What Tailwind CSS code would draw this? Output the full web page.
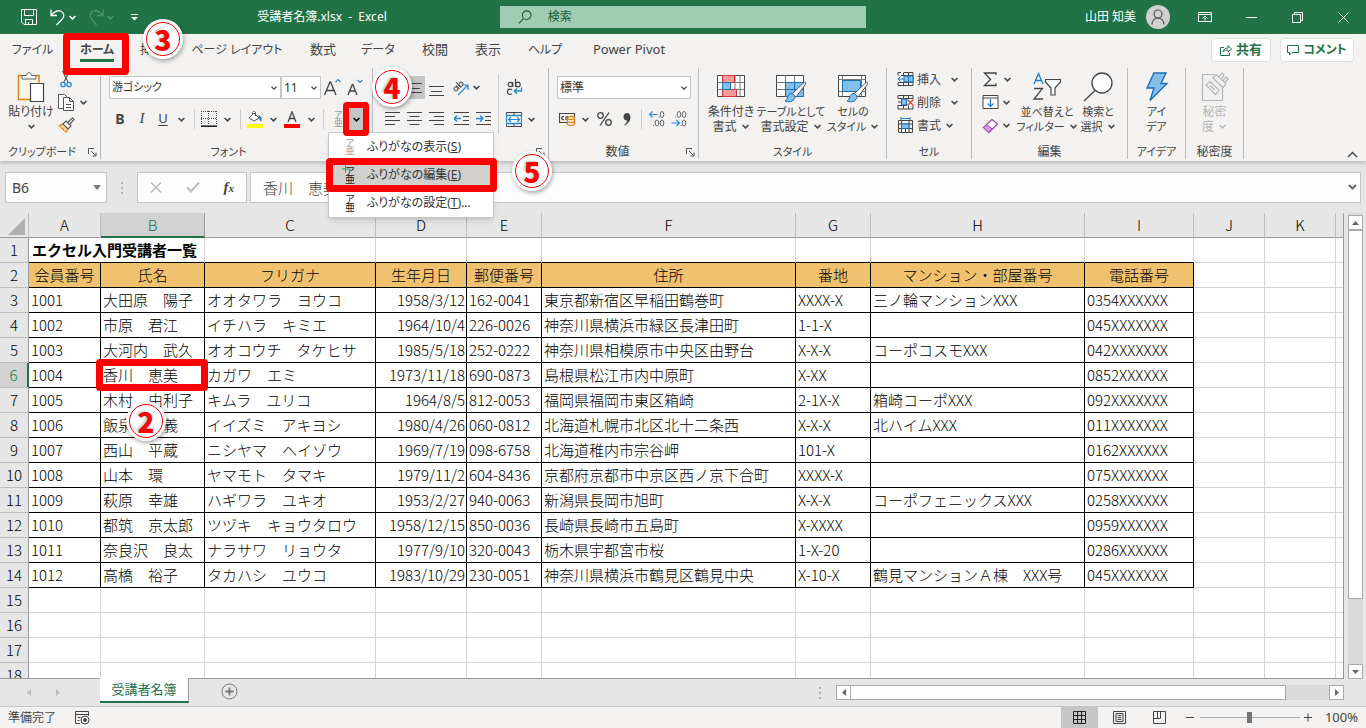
<!DOCTYPE html>
<html lang="ja">
<head>
<meta charset="utf-8">
<title>受講者名簿.xlsx - Excel</title>
<script src="https://cdn.jsdelivr.net/npm/@tailwindcss/browser@4"></script>
</head>
<body class="relative flex h-screen flex-col overflow-hidden bg-[#e6e6e6] font-['Noto_Sans','Noto_Sans_CJK_JP',sans-serif] text-xs text-[#444] [font-feature-settings:'palt']">

<svg class="hidden" aria-hidden="true">
  <symbol id="chev" viewBox="0 0 8 8"><path d="M1.4 2.6 4 5.2 6.6 2.6" fill="none" stroke="currentColor" stroke-width="1.3"/></symbol>
  <symbol id="launch" viewBox="0 0 9 9"><path d="M.5 6V.5H6M3 3l4.5 4.5M8 4.5V8H4.5" fill="none" stroke="#555"/></symbol>
</svg>

<!-- Title bar -->
<header class="flex h-[34px] shrink-0 items-center bg-[#217346] text-white">
  <div class="flex w-[180px] shrink-0 items-center pl-[20px]">
    <button aria-label="上書き保存" class="w-[30px]"><svg width="18" height="18" viewBox="0 0 18 18" fill="none" stroke="#fff"><path d="M1.500 1.500h15v15h-12.500l-2.500-2.500zM4.500 1.500v6h9v-6M5.500 16.500v-5h7v5M8.500 16v-2"/></svg></button>
    <button aria-label="元に戻す" class="w-[18px]"><svg width="17" height="18" viewBox="0 0 17 18" fill="none" stroke="#fff" stroke-width="1.300"><path d="M1 1.500v6h6M1.200 7.200C4 4 7 2 10.500 3c4 1.500 4 5.500 1.800 8L6.500 17"/></svg></button>
    <button aria-label="元に戻すの履歴" class="w-[20px]"><svg class="mx-auto mr-3" width="9" height="9"><use href="#chev"/></svg></button>
    <button aria-label="やり直し" class="w-[18px] text-[#4f9470]"><svg width="17" height="18" viewBox="0 0 17 18" fill="none" stroke="currentColor" stroke-width="1.300"><path d="M15 1.500v6H9M14.800 7.200C12 4 9 2 5.500 3c-4 1.500-4 5.500-1.800 8L8.500 17"/></svg></button>
    <button aria-label="やり直しの履歴" class="w-[20px] text-[#4f9470]"><svg class="mx-auto mr-3" width="9" height="9"><use href="#chev"/></svg></button>
    <button aria-label="クイック アクセス ツール バーのカスタマイズ" class="w-[16px]"><svg class="mx-auto" width="9" height="9" viewBox="0 0 9 9"><path d="M1 1.500h7" stroke="#fff"/><path d="M1 4h7L4.500 7.500z" fill="#fff"/></svg></button>
  </div>
  <h1 class="flex-1 max-w-[284px] text-center text-[12px] whitespace-pre">受講者名簿.xlsx  -  Excel</h1>
  <label class="ml-[36px] flex h-[22px] w-[366px] items-center bg-[#9fcdb3] pl-[18px] text-[#185c37]">
    <svg width="16" height="16" viewBox="0 0 16 16" fill="none" stroke="#185c37" stroke-width="1.200"><circle cx="9.500" cy="6" r="4.700"/><path d="M6.200 9.500 1 15"/></svg>
    <input aria-label="検索" placeholder="検索" class="ml-[15px] w-full bg-transparent text-[12px] outline-none placeholder:text-[#185c37]">
  </label>
  <div class="ml-auto flex items-center">
    <span class="mr-[10px] text-[12px]">山田 知美</span>
    <button aria-label="アカウント" class="mr-[11px] flex size-6 items-center justify-center rounded-full bg-[#d0d0d0]"><svg width="16" height="18" viewBox="0 0 16 18" fill="none" stroke="#555" stroke-width="1.200"><circle cx="8" cy="6" r="4"/><path d="M2 16.500c.5-8.500 11.500-8.500 12 0"/></svg></button>
    <button aria-label="リボンの表示オプション" class="flex w-[47px] justify-center"><svg width="14" height="12" viewBox="0 0 14 12" fill="none" stroke="#fff"><path d="M.5 1.500h13v9H.5zM.5 3.500h13M7 9.500v-4M4.500 7.500 7 5l2.500 2.500"/></svg></button>
    <button aria-label="最小化" class="flex w-[46px] justify-center"><svg width="11" height="11"><path d="M0 5.500h11" stroke="#fff"/></svg></button>
    <button aria-label="元に戻す (縮小)" class="flex w-[46px] justify-center"><svg width="11" height="11" viewBox="0 0 11 11" fill="none" stroke="#fff"><path d="M.5 2.500h8v8h-8zM2.500 2.500v-2h8v8h-2"/></svg></button>
    <button aria-label="閉じる" class="flex w-[46px] justify-center"><svg width="11" height="11"><path d="M.5.500l10 10M10.500.500l-10 10" stroke="#fff"/></svg></button>
  </div>
</header>

<!-- Ribbon tabs -->
<nav class="relative z-20 flex h-[31px] shrink-0 items-center bg-[#f3f2f1] text-[12px] whitespace-nowrap">
  <a href="#" class="w-[65px] shrink-0 text-center">ファイル</a>
  <a href="#" class="relative w-16 shrink-0 text-center font-bold">ホーム<span class="absolute -bottom-1 left-[15px] h-[3px] w-[34px] bg-[#217346]"></span><span class="absolute -top-[9px] -left-[2px] z-10 h-[42px] w-[66px] rounded border-[7px] border-[#f00]"></span></a>
  <a href="#" class="w-[46px] shrink-0 text-center">挿入</a>
  <a href="#" class="w-[124px] shrink-0 text-center">ページ レイアウト</a>
  <a href="#" class="w-12 shrink-0 text-center text-[13px]">数式</a>
  <a href="#" class="w-[62px] shrink-0 text-center">データ</a>
  <a href="#" class="w-[52px] shrink-0 text-center text-[13px]">校閲</a>
  <a href="#" class="w-[54px] shrink-0 text-center text-[13px]">表示</a>
  <a href="#" class="w-[60px] shrink-0 text-center">ヘルプ</a>
  <a href="#" class="w-[108px] shrink-0 text-center text-[13px]">Power Pivot</a>
  <div class="mr-3 ml-auto flex gap-[9px] font-bold text-[#217346]">
    <button class="flex h-6 w-[60px] items-center justify-center gap-1 rounded-sm border border-[#e1dfdd] bg-white text-[13px]"><svg width="12" height="12" viewBox="0 0 12 12" fill="none" stroke="#217346"><path d="M4 3.500H.5v8h9V9M3 8c.5-3 2.500-4 5-4V1.500L11.500 5 8 8V6C6 6 4.500 6.500 3 8z"/></svg>共有</button>
    <button class="flex h-6 w-[74px] items-center justify-center gap-1 rounded-sm border border-[#e1dfdd] bg-white"><svg width="12" height="12" viewBox="0 0 12 12" fill="none" stroke="#217346"><path d="M.5 1.500h11v7H5L2.500 11V8.500h-2z"/></svg>コメント</button>
  </div>
</nav>

<!-- Ribbon -->
<section aria-label="リボン" class="relative z-10 flex h-24 shrink-0 bg-[#f3f2f1] pt-[3px] pb-[2px] whitespace-nowrap shadow-[0_2px_4px_#b8b8b8]">

  <div class="flex w-[101px] shrink-0 flex-col border-r border-[#bbb]">
    <div class="flex h-[78px]">
      <button class="flex w-[54px] flex-col items-center pt-1 pl-2 text-[12px] leading-4">
        <svg width="28" height="31" viewBox="0 0 28 31" fill="none"><path d="M5.500 3.500H1.500v24h12M18 3.500h4v7" stroke="#e08214" stroke-width="1.600"/><path d="M2.500 5h18v21h-18z" fill="#fcf6ea"/><path d="M5 7V3.500h4.500C10-.500 14-.500 14.500 3.500H19V7z" fill="#f6f6f6" stroke="#666"/><path d="M13.500 11.500h13v18h-13z" fill="#fff" stroke="#444" stroke-width="1.200"/></svg>
        <span class="mt-px">貼り付け</span><svg class="mt-0.5" width="9" height="9"><use href="#chev"/></svg>
      </button>
      <div class="flex flex-col gap-[6px] pt-[3px] pl-1">
        <button aria-label="切り取り"><svg width="16" height="17" viewBox="0 0 16 17" fill="none"><path d="M4.500 0 10 11M11.500 0 6 11" stroke="#555" stroke-width="1.100"/><circle cx="5" cy="13.500" r="2.200" stroke="#2b88d8" stroke-width="1.300"/><circle cx="11" cy="13.500" r="2.200" stroke="#2b88d8" stroke-width="1.300"/></svg></button>
        <button aria-label="コピー" class="flex items-center gap-1"><svg width="17" height="17" viewBox="0 0 17 17" fill="#fff" stroke="#555"><path d="M5 14.500H.5v-14h6L9 3"/><path d="M5.500 3.500h6l4 4v9h-10zM11.500 3.500v4h4M8 10.500h5M8 13.500h5"/></svg><svg width="9" height="9"><use href="#chev"/></svg></button>
        <button aria-label="書式のコピー/貼り付け"><svg width="17" height="16" viewBox="0 0 17 16"><path d="m1 8.500 4-1.500 5 5-2 3.500z" fill="#fbd38d" stroke="#d9730d"/><path d="m5 7 3-3 5 5-3 3zM10 5l4.500-4 1.500 1.500L12 7" fill="#fff" stroke="#555" stroke-width="1.200"/><path d="m4 11 2 2" stroke="#d9730d"/></svg></button>
      </div>
    </div>
    <div class="flex h-[14px] items-center leading-[14px]"><span class="w-[84px] text-center text-[11px]">クリップボード</span><button aria-label="クリップボードの詳細" class="ml-1"><svg width="9" height="9"><use href="#launch"/></svg></button></div>
  </div>

  <div class="flex w-[272px] shrink-0 flex-col border-r border-[#bbb]">
    <div class="flex h-[78px] flex-col gap-2 pt-2 pl-2">
      <div class="flex h-[23px] items-center">
        <div class="relative h-[23px] w-[172px]"><select aria-label="フォント" class="h-full w-full appearance-none border border-[#c6c6c6] bg-white pl-[2px] text-[11px] text-[#333]"><option>游ゴシック</option></select><svg class="pointer-events-none absolute top-2 right-[3px]" width="8" height="8"><use href="#chev"/></svg></div>
        <div class="relative h-[23px] w-[40px]"><select aria-label="フォント サイズ" class="h-full w-full appearance-none border border-[#c6c6c6] bg-white pl-[2px] text-[12px] text-[#333]"><option>11</option></select><svg class="pointer-events-none absolute top-2 right-[3px]" width="8" height="8"><use href="#chev"/></svg></div>
        <button aria-label="フォント サイズの拡大" class="ml-[2px] flex w-[23px]"><svg width="19" height="20" viewBox="0 0 19 20" fill="none"><path d="M1.500 17 7 4h.5L13 17M3.500 12.500h7.500" stroke="#444" stroke-width="1.300"/><path d="m12.500 4 2.500-2.500L17.500 4" stroke="#2b88d8" stroke-width="1.200"/></svg></button>
        <button aria-label="フォント サイズの縮小" class="flex"><svg width="19" height="20" viewBox="0 0 19 20" fill="none"><path d="M2 17 6.300 6.500h.5L11 17M3.500 13h6" stroke="#444" stroke-width="1.300"/><path d="m11.500 2 2.500 2.500L16.500 2" stroke="#2b88d8" stroke-width="1.200"/></svg></button>
      </div>
      <div class="flex h-[24px] items-center">
        <button class="w-[22px] text-[14px] font-bold">B</button>
        <button class="w-[22px] font-['Liberation_Serif',serif] text-[15px] italic">I</button>
        <button class="w-[20px] text-[13px] underline underline-offset-2">U</button>
        <button aria-label="下線の種類" class="flex w-4 justify-center"><svg width="9" height="9"><use href="#chev"/></svg></button>
        <span class="mx-[5px] h-5 w-px bg-[#ccc]"></span>
        <button aria-label="罫線" class="flex w-[18px] justify-center"><svg width="16" height="16" viewBox="0 0 16 16" fill="none" stroke="#444"><path d="M0 .5h16M0 7.500h16M.5 0v14M7.500 0v14M15.500 0v14" stroke-dasharray="1 1"/><path d="M0 15.200h16" stroke="#222" stroke-width="1.600"/></svg></button>
        <button aria-label="罫線の種類" class="flex w-[18px] justify-center"><svg width="9" height="9"><use href="#chev"/></svg></button>
        <span class="mx-1 h-5 w-px bg-[#ccc]"></span>
        <button aria-label="塗りつぶしの色" class="flex w-5 justify-center"><svg width="18" height="17" viewBox="0 0 18 17"><path d="m3 7 5-5 5 5-5 3zM6.500 4V1.500C7-.500 9.500 0 9.500 2v3" fill="#fff" stroke="#555"/><path d="M12 4.500c3 0 4 2 3.500 6-1-1-2.500-1-2-3z" fill="#1a6fb5"/><path d="M1 13h16v4H1z" fill="#ff0"/></svg></button>
        <button aria-label="塗りつぶしの色の選択" class="flex w-4 justify-center"><svg width="9" height="9"><use href="#chev"/></svg></button>
        <button aria-label="フォントの色" class="flex w-[22px] justify-center"><svg width="16" height="17" viewBox="0 0 16 17"><path d="M4 11 8 .8 12 11M5.400 7.500h5.200" fill="none" stroke="#444" stroke-width="1.300"/><path d="M0 13h16v4H0z" fill="#f00"/></svg></button>
        <button aria-label="フォントの色の選択" class="flex w-4 justify-center"><svg width="9" height="9"><use href="#chev"/></svg></button>
        <span class="mx-1 h-5 w-px bg-[#ccc]"></span>
        <button aria-label="ふりがなの表示/非表示" class="flex w-[21px] flex-col items-center text-[9px] leading-[8px] text-[#999]"><span>ア</span><span>亜</span></button>
        <div class="relative">
          <button aria-label="ふりがなメニュー" class="flex h-[22px] w-[14px] items-center justify-center bg-[#c5c5c5] text-black"><svg width="9" height="9"><use href="#chev"/></svg></button>
          <span class="absolute -top-[6px] -left-[6px] z-20 h-[34px] w-[26px] rounded border-[6px] border-[#f00]"></span>
          <div role="menu" class="absolute top-[24px] -left-[21px] flex w-[166px] flex-col border border-[#c6c6c6] bg-white text-[12px] text-[#333] shadow-md">
            <button role="menuitem" class="flex h-7 items-center"><span class="flex w-[38px] flex-col items-center pl-1 text-[9px] leading-[8px] text-[#999]"><span>ア</span><span>亜</span></span>ふりがなの表示(<u>S</u>)</button>
            <button role="menuitem" class="relative flex h-7 items-center bg-[#d2d0ce]"><span class="flex w-[38px] flex-col items-center pl-1 text-[10px] leading-[8px] text-[#222]"><span>ア</span><span>亜</span></span><svg class="absolute top-1 left-[13px]" width="8" height="8"><path d="M0 4h7M3.500.500v7" stroke="#21a366"/></svg>ふりがなの編集(<u>E</u>)<span class="absolute -top-[3px] -left-[3px] z-20 h-[34px] w-[171px] rounded border-[7px] border-[#f00]"></span></button>
            <button role="menuitem" class="flex h-7 items-center"><span class="flex w-[38px] flex-col items-center pl-1 text-[10px] leading-[8px] text-[#222]"><span>ア</span><span>亜</span></span>ふりがなの設定(<u>T</u>)...</button>
          </div>
        </div>
      </div>
    </div>
    <div class="h-[14px] pr-4 text-center text-[11px] leading-[14px]">フォント</div>
  </div>

  <div class="flex w-[176px] shrink-0 flex-col border-r border-[#bbb]">
    <div class="flex h-[78px] pl-2">
      <div class="flex w-[117px] flex-col gap-2 pt-2">
        <div class="flex h-[23px] items-center">
          <button aria-label="上揃え" class="flex w-[22px] justify-center"><svg width="15" height="14" stroke="#444"><path d="M0 1.500h15M2 5.500h11M0 9.500h15"/></svg></button>
          <button aria-label="上下中央揃え" class="flex h-[23px] w-[22px] items-center justify-center bg-[#c5c5c5]"><svg width="15" height="14" stroke="#444"><path d="M0 2.500h15M2 7.500h11M0 11.500h15"/></svg></button>
          <button aria-label="下揃え" class="flex w-[22px] justify-center pt-1"><svg width="15" height="14" stroke="#444"><path d="M0 3.500h15M2 8.500h11M0 12.500h15"/></svg></button>
          <button aria-label="方向" class="ml-[3px] flex w-[22px] justify-center"><svg width="18" height="18" viewBox="0 0 18 18" fill="none"><g transform="rotate(-42 6 8)" stroke="#555" stroke-width="1.100"><circle cx="3.200" cy="8" r="2"/><path d="M5.700 5.500v5M7.800 3v7.500"/><circle cx="10" cy="8" r="2"/></g><path d="m6 16 9.500-9.500M11 6h5v5" stroke="#2b88d8" stroke-width="1.200"/></svg></button>
          <button aria-label="方向の選択" class="flex w-[10px]"><svg width="9" height="9"><use href="#chev"/></svg></button>
        </div>
        <div class="flex h-[24px] items-center">
          <button aria-label="左揃え" class="flex w-[22px] justify-center"><svg width="15" height="14" stroke="#444"><path d="M0 .5h15M0 4.500h10M0 8.500h15M0 12.500h10"/></svg></button>
          <button aria-label="中央揃え" class="flex w-[22px] justify-center"><svg width="15" height="14" stroke="#444"><path d="M0 .5h15M2.500 4.500h10M0 8.500h15M2.500 12.500h10"/></svg></button>
          <button aria-label="右揃え" class="flex w-[22px] justify-center"><svg width="15" height="14" stroke="#444"><path d="M0 .5h15M5 4.500h10M0 8.500h15M5 12.500h10"/></svg></button>
          <button aria-label="インデントを減らす" class="ml-[3px] flex w-[22px] justify-center"><svg width="15" height="14" fill="none" stroke="#444"><path d="M0 .5h15M9 4.500h6M9 8.500h6M0 12.500h15"/><path d="M0 6.500h7M3 3.500l-3 3 3 3" stroke="#2b88d8" stroke-width="1.400"/></svg></button>
          <button aria-label="インデントを増やす" class="flex w-[22px] justify-center"><svg width="15" height="14" fill="none" stroke="#444"><path d="M0 .5h15M9 4.500h6M9 8.500h6M0 12.500h15"/><path d="M0 6.500h7M4 3.500l3 3-3 3" stroke="#2b88d8" stroke-width="1.400"/></svg></button>
        </div>
      </div>
      <span class="mt-[6px] h-[60px] w-px bg-[#ccc]"></span>
      <div class="flex flex-col gap-2 pt-2 pl-1">
        <button aria-label="折り返して全体を表示する" class="flex h-[23px] w-[24px] items-center justify-center"><svg width="16" height="17" viewBox="0 0 16 17" fill="none" stroke="#444" stroke-width="1.200"><circle cx="3.300" cy="5.500" r="2.200"/><path d="M5.700 3v5M8.500 0v8M5 10.700c-3-1.500-4.500 0-4.500 2s1.500 3.500 4.500 2"/><circle cx="10.900" cy="5.500" r="2.300"/><path d="M14.500 8.500v3.500H7.500M10 9.500 7.300 12l2.700 2.700" stroke="#2b88d8" stroke-width="1.400"/></svg></button>
        <div class="flex h-6 items-center"><button aria-label="セルを結合して中央揃え" class="flex w-[22px] justify-center"><svg width="16" height="15" viewBox="0 0 16 15" fill="none" stroke="#444"><path d="M.5.5h15v14H.5zM8 .5v3M8 12v2.500"/><path d="M.5 3.500h15v8H.5z" fill="#fff" stroke="#2b88d8" stroke-width="1.400"/><path d="M2.500 7.500h11M5 5 2.500 7.500 5 10M11 5l2.500 2.500L11 10" stroke="#2b88d8" stroke-width="1.200"/></svg></button><button aria-label="結合の種類" class="flex w-3 justify-center"><svg width="9" height="9"><use href="#chev"/></svg></button></div>
      </div>
    </div>
    <div class="flex h-[14px] items-center leading-[14px]"><span class="w-[163px] text-center">配置</span><button aria-label="配置の詳細"><svg width="9" height="9"><use href="#launch"/></svg></button></div>
  </div>

  <div class="flex w-[150px] shrink-0 flex-col border-r border-[#bbb]">
    <div class="flex h-[78px] flex-col gap-2 px-2 pt-2">
      <div class="relative h-[23px] w-[134px]"><select aria-label="数値の書式" class="h-full w-full appearance-none border border-[#c6c6c6] bg-white pl-[2px] text-[12px] text-[#333]"><option>標準</option></select><svg class="pointer-events-none absolute top-2 right-[3px]" width="8" height="8"><use href="#chev"/></svg></div>
      <div class="flex h-6 items-center">
        <button aria-label="通貨表示形式" class="flex w-[22px] justify-center"><svg width="17" height="14" viewBox="0 0 17 14" fill="none" stroke="#444"><path d="M8 10.500H.5v-9h15V5M5 4.500c-3-.5-3 3.500 0 3M7 8V5l2-.5" stroke-width="1.200"/><path d="M8.500 6v6c0 2 7 2 7 0V6" fill="#fff" stroke="#e8820c" stroke-width="1.300"/><ellipse cx="12" cy="6" rx="3.500" ry="1.500" fill="#fff" stroke="#e8820c" stroke-width="1.300"/><path d="M8.500 9c0 2 7 2 7 0" stroke="#e8820c" stroke-width="1.300"/></svg></button>
        <button aria-label="通貨の選択" class="flex w-[14px] justify-center"><svg width="9" height="9"><use href="#chev"/></svg></button>
        <button aria-label="パーセント スタイル" class="flex w-6 justify-center"><svg width="15" height="14" viewBox="0 0 15 14" fill="none" stroke="#444" stroke-width="1.300"><circle cx="3.500" cy="3.500" r="2.800"/><circle cx="11.500" cy="10.500" r="2.800"/><path d="M12 .5 3 13.500"/></svg></button>
        <button aria-label="桁区切りスタイル" class="flex w-[21px] justify-center"><svg width="8" height="13" viewBox="0 0 8 13"><path d="M4 0c5 0 5 9-2.500 12.500L1 12c2-1.200 3-3 3-4.500C-.500 7.500-.800 0 4 0z" fill="#444"/></svg></button>
        <span class="mx-1 h-5 w-px bg-[#ccc]"></span>
        <button aria-label="小数点以下の表示桁数を増やす" class="flex w-[22px] justify-center"><svg width="16" height="16" viewBox="0 0 16 16" fill="none" stroke="#666"><ellipse cx="13" cy="3.500" rx="1.800" ry="3"/><ellipse cx="8" cy="12" rx="1.800" ry="3"/><ellipse cx="13" cy="12" rx="1.800" ry="3"/><path d="M4 14.500h1M9.500 6h1"/><path d="M.5 3.500h8M3.500.500l-3 3 3 3" stroke="#2b88d8" stroke-width="1.200"/></svg></button>
        <button aria-label="小数点以下の表示桁数を減らす" class="flex w-[22px] justify-center"><svg width="16" height="16" viewBox="0 0 16 16" fill="none" stroke="#666"><ellipse cx="8" cy="3.500" rx="1.800" ry="3"/><ellipse cx="13" cy="3.500" rx="1.800" ry="3"/><ellipse cx="13" cy="12" rx="1.800" ry="3"/><path d="M4 6h1M9.500 14.500h1"/><path d="M.5 12h8M5.500 9l3 3-3 3" stroke="#2b88d8" stroke-width="1.200"/></svg></button>
      </div>
    </div>
    <div class="flex h-[14px] items-center leading-[14px]"><span class="w-[137px] text-center">数値</span><button aria-label="数値の詳細"><svg width="9" height="9"><use href="#launch"/></svg></button></div>
  </div>

  <div class="flex w-[188px] shrink-0 flex-col border-r border-[#bbb]">
    <div class="flex h-[78px] pl-1 text-[12px] leading-[15px]">
      <button class="flex w-14 flex-col items-center pt-[6px]"><svg class="mb-px" width="30" height="29" viewBox="0 0 30 29" fill="none"><path d="M1.500 1.500h27v21h-27z" fill="#fff" stroke="#444"/><path d="M1.500 8.500h27M1.500 15.500h27M6.500 1.500v21M19 1.500v21M24 1.500v21" stroke="#777"/><path d="M6.500 1.500h12v7h-12zM6.500 15.500h14v7h-14z" fill="#ff9a9a" stroke="#d13438"/><path d="M6.500 8.500h8v7h-8z" fill="#83beec" stroke="#1a6fb5"/></svg><span>条件付き</span><span class="flex items-center gap-1">書式<svg width="9" height="9"><use href="#chev"/></svg></span></button>
      <button class="flex w-16 flex-col items-center pt-[6px]"><svg class="mb-px" width="32" height="29" viewBox="0 0 32 29" fill="none"><path d="M1.500 1.500h27v21h-27z" fill="#fff" stroke="#444"/><path d="M1.500 8.500h27M1.500 15.500h27M10.500 1.500v21M19.500 1.500v21" stroke="#777"/><path d="M10.500 8.500h18v14h-18z" fill="#83beec" stroke="#1a6fb5"/><path d="M10.500 15.500h18M19.500 8.500v14" stroke="#1a6fb5"/><path d="M29 8.500c2-1 2 1 1 2.500l-9 12-4-3z" fill="#fff" stroke="#555"/><path d="M16 19.500c4 .5 5 3.500 3 6-2.500 3-7 2.500-9 1.500 3-1 2-7 6-7.500z" fill="#83beec" stroke="#1a6fb5"/></svg><span class="text-[11px]">テーブルとして</span><span class="flex items-center gap-1">書式設定<svg width="9" height="9"><use href="#chev"/></svg></span></button>
      <button class="flex w-[60px] flex-col items-center pt-[6px]"><svg class="mb-px" width="32" height="29" viewBox="0 0 32 29" fill="none"><path d="M1.500 1.500h27v21h-27z" fill="#fff" stroke="#444"/><path d="M1.500 5.500h27M1.500 17.500h27M5.500 1.500v21M24.500 1.500v21" stroke="#777"/><path d="M5.500 6.500h18v11h-18z" fill="#83beec" stroke="#1a6fb5"/><path d="M29 8.500c2-1 2 1 1 2.500l-9 12-4-3z" fill="#fff" stroke="#555"/><path d="M16 19.500c4 .5 5 3.500 3 6-2.500 3-7 2.500-9 1.500 3-1 2-7 6-7.500z" fill="#83beec" stroke="#1a6fb5"/></svg><span class="text-[11px]">セルの</span><span class="flex items-center gap-1 text-[11px]">スタイル<svg width="9" height="9"><use href="#chev"/></svg></span></button>
    </div>
    <div class="h-[14px] text-center text-[11px] leading-[14px]">スタイル</div>
  </div>

  <div class="flex w-[85px] shrink-0 flex-col border-r border-[#bbb]">
    <div class="flex h-[78px] flex-col pl-[10px]">
      <button class="flex h-[23px] items-center"><svg width="17" height="15" viewBox="0 0 17 15" fill="none" stroke="#444"><path d="M4 .5H1v3M7 .5h9v13H1v-3M6.500 .5v3M11.500 .5v3M6.500 10.500v3M11.500 10.500v3M1 10.500h15M4 3.500h12"/><path d="M7 4h9v6H7z" fill="#83beec" stroke="#1a6fb5"/><path d="M11.500 4v6M7 7H1M3.500 4.500 1 7l2.500 2.500" stroke="#1a7fd0"/></svg><span class="w-[36px] pl-[3px] text-left">挿入</span><svg width="9" height="9"><use href="#chev"/></svg></button>
      <button class="flex h-[23px] items-center"><svg width="17" height="15" viewBox="0 0 17 15" fill="none" stroke="#444"><path d="M16 3.500V.5H1v3h3M1 10v4h15v-3M6.500.500v3M11.500.500v3M6.500 10.500v3M11.500 11v3M1 10.500h9M1 3.500h15M1 7h3"/><path d="M4.500 4h5v6h-5z" fill="#83beec" stroke="#1a6fb5"/><path d="m10.500 4.500 6 6M16.500 4.500l-6 6" stroke="#e03c31" stroke-width="1.300"/></svg><span class="w-[36px] pl-[3px] text-left">削除</span><svg width="9" height="9"><use href="#chev"/></svg></button>
      <button class="flex h-[23px] items-center"><svg width="17" height="17" viewBox="0 0 17 17" fill="none" stroke="#444"><path d="M1.500 3.500h14v12h-14zM1.500 11.500h14M4.500 3.500v12M12 3.500v12M1.500 7h14M8.500 12v3.500"/><path d="M4.500 7h7.500v4.500H4.500z" fill="#83beec" stroke="#1a6fb5"/><path d="M4 1.500h9M4 0v3M13 0v3" stroke="#1a7fd0"/></svg><span class="w-[31px] pl-[3px] text-left">書式</span><svg width="9" height="9"><use href="#chev"/></svg></button>
    </div>
    <div class="h-[14px] text-center text-[11px] leading-[14px]">セル</div>
  </div>

  <div class="flex w-[156px] shrink-0 flex-col border-r border-[#bbb]">
    <div class="flex h-[78px] pl-[10px]">
      <div class="flex w-[36px] flex-col">
        <button aria-label="合計" class="flex h-[23px] items-center gap-1"><svg width="17" height="15" viewBox="0 0 17 15" fill="none" stroke="#444" stroke-width="1.300"><path d="M14 3V1H2.500L8.500 7.500l-6 6H14v-2"/></svg><svg width="9" height="9"><use href="#chev"/></svg></button>
        <button aria-label="フィル" class="flex h-[23px] items-center gap-[3px]"><svg width="17" height="15" viewBox="0 0 17 15" fill="#fff" stroke="#444"><path d="M1 .5h15v13H1zM1 3h15"/><path d="M8.500 4v7M5.500 8.500l3 3 3-3" fill="none" stroke="#1a7fd0" stroke-width="1.200"/></svg><svg width="9" height="9"><use href="#chev"/></svg></button>
        <button aria-label="クリア" class="flex h-[23px] items-center gap-[3px]"><svg width="17" height="16" viewBox="0 0 17 16"><path d="M1.500 9.500 10 1.500l5.500 4.500L7 14.500z" fill="#fff" stroke="#9b3fb5" stroke-width="1.200"/><path d="M1.500 9.500 4.700 6.500 10.200 11 7 14.500z" fill="#d59be0" stroke="#9b3fb5"/></svg><svg width="9" height="9"><use href="#chev"/></svg></button>
      </div>
      <button class="flex w-[58px] flex-col items-center pt-1 text-[11px] leading-[15px]"><svg class="mb-px" width="30" height="31" viewBox="0 0 30 31" fill="none"><path d="M2 12 6.500 1.500 11 12M3.500 8.500h6" stroke="#1a7fd0" stroke-width="1.300"/><path d="M2 16.500h8.500L2 27h9" stroke="#444" stroke-width="1.300"/><path d="M13.500 7.500h15v2.500l-5.500 6v7h-4v-7l-5.500-6z" fill="#fff" stroke="#444" stroke-width="1.200"/></svg><span>並べ替えと</span><span class="flex items-center gap-1">フィルター<svg width="9" height="9"><use href="#chev"/></svg></span></button>
      <button class="flex w-[44px] flex-col items-center pt-1 text-[11px] leading-[15px]"><svg class="mb-px" width="30" height="31" viewBox="0 0 30 31" fill="none" stroke="#444" stroke-width="1.300"><circle cx="19" cy="11" r="10" fill="#fdfdfd"/><path d="M12 18.500 1 29"/></svg><span>検索と</span><span class="flex items-center gap-1">選択<svg width="9" height="9"><use href="#chev"/></svg></span></button>
    </div>
    <div class="h-[14px] text-center leading-[14px]">編集</div>
  </div>

  <div class="flex w-[58px] shrink-0 flex-col border-r border-[#bbb]">
    <button class="flex h-[78px] flex-col items-center pt-1 text-[11px] leading-[15px]"><svg class="mb-px" width="24" height="31" viewBox="0 0 24 31"><path d="M9 1h12l-5 10.500h6L5 28.500l4-12.500H2z" fill="#83beec" stroke="#1a6fb5" stroke-width="1.400"/></svg><span>アイ</span><span>デア</span></button>
    <div class="h-[14px] text-center text-[11px] leading-[14px]">アイデア</div>
  </div>

  <div class="flex w-[58px] shrink-0 flex-col border-r border-[#bbb]">
    <button disabled class="flex h-[78px] flex-col items-center pt-1 text-[12px] leading-[15px] text-[#b5b5b5]"><svg class="mb-px" width="28" height="31" viewBox="0 0 28 31" fill="none" stroke="#b5b5b5" stroke-width="1.200"><path d="M13 2.500H1.500v26h20V16" fill="#f0f0f0"/><path d="m5 13 4-3.500 9 8.500-3.500 4.500zM9 13.500l5 4.500" fill="#f3f2f1"/><path d="m12 6 3-3.500 10 9-3 4zM18 5l3-4 2 1.500-2 4.500M22 9l3-4 2 2-3.500 4" fill="#f3f2f1"/></svg><span>秘密</span><span class="flex items-center gap-1">度<svg width="9" height="9"><use href="#chev"/></svg></span></button>
    <div class="h-[14px] text-center leading-[14px]">秘密度</div>
  </div>
  <button aria-label="リボンを折りたたむ" class="mr-2 ml-auto self-end"><svg width="11" height="8" viewBox="0 0 11 8"><path d="m1 6 4.500-4.500L10 6" fill="none" stroke="#444" stroke-width="1.400"/></svg></button>
</section>

<!-- Formula bar -->
<section aria-label="数式バー" class="flex h-[52px] shrink-0 items-center pt-px pr-[5px] pl-[5px]">
  <div class="relative h-[31px] w-[102px]"><input aria-label="名前ボックス" value="B6" class="h-full w-full border border-[#c6c6c6] bg-[#fdfdfd] pl-[6px] text-[14px]"><svg class="absolute top-[13px] right-[6px]" width="8" height="5"><path d="M0 0h8L4 5z" fill="#777"/></svg></div>
  <svg class="mx-[13px]" width="4" height="12"><path d="M1 0h2v2H1zM1 5h2v2H1zM1 10h2v2H1z" fill="#b0b0b0"/></svg>
  <div class="flex h-[31px] w-[110px] items-center justify-around border border-[#c6c6c6] bg-[#fdfdfd]">
    <button aria-label="キャンセル"><svg width="12" height="11"><path d="m1 .5 10 10M11 .5l-10 10" stroke="#bbb" stroke-width="1.500"/></svg></button>
    <button aria-label="入力"><svg width="14" height="11"><path d="m1 5.500 4 4 8-9" fill="none" stroke="#bbb" stroke-width="2"/></svg></button>
    <button aria-label="関数の挿入" class="font-['Liberation_Serif',serif] text-[15px] font-bold italic">f<span class="text-[11px]">x</span></button>
  </div>
  <div class="relative ml-[3px] h-[31px] flex-1"><input aria-label="数式" value="香川　恵美" class="h-full w-full border border-[#c6c6c6] bg-[#fdfdfd] pl-3 font-['Noto_Sans_CJK_JP',sans-serif] text-[15px] font-light [font-feature-settings:normal]"><svg class="absolute top-[11px] right-[4px]" width="9" height="8"><path d="m1 2 3.500 3.500L8 2" fill="none" stroke="#666" stroke-width="2"/></svg></div>
</section>

<!-- Worksheet -->
<main class="flex min-h-0 flex-1">
  <div class="min-w-0 flex-1 overflow-hidden border-r border-b border-[#9b9b9b]">
    <table class="w-full table-fixed border-separate border-spacing-0 font-['Noto_Sans_CJK_JP',sans-serif] text-[15px] leading-6 font-light whitespace-pre text-black [font-feature-settings:normal]">
      <colgroup><col class="w-[29px]"><col class="w-[72px]"><col class="w-[104px]"><col class="w-[171px]"><col class="w-[91px]"><col class="w-[75px]"><col class="w-[254px]"><col class="w-[75px]"><col class="w-[214px]"><col class="w-[109px]"><col class="w-[71px]"><col class="w-[71px]"><col></colgroup>
      <thead><tr id="cols" class="leading-[22px]"></tr></thead>
      <tbody id="rows"></tbody>
    </table>
  </div>
  <div class="mr-[3px] ml-1 flex w-[15px] flex-col bg-[#d9d9d9] pt-[2px]">
    <button aria-label="上へスクロール" class="flex h-[15px] items-center justify-center border border-[#ababab] bg-white"><svg width="7" height="4"><path d="M0 4h7L3.500 0z" fill="#666"/></svg></button>
    <div class="h-[369px] border border-[#ababab] bg-white"></div>
    <button aria-label="下へスクロール" class="mt-auto flex h-[15px] items-center justify-center border border-[#ababab] bg-white"><svg width="7" height="4"><path d="M0 0h7L3.500 4z" fill="#666"/></svg></button>
  </div>
</main>

<!-- Sheet tabs -->
<section aria-label="シート" class="flex h-[27px] shrink-0 items-start">
  <div class="flex h-[26px] w-[100px] items-center gap-[23px] pl-[26px]">
    <button aria-label="前のシート"><svg width="6" height="7"><path d="M5 0v7L1 3.500z" fill="#bbb"/></svg></button>
    <button aria-label="次のシート"><svg width="6" height="7"><path d="M1 0v7l4-3.500z" fill="#bbb"/></svg></button>
  </div>
  <button class="relative z-10 -mt-px h-[25px] w-[89px] border-r border-b-2 border-r-[#9b9b9b] border-b-[#217346] bg-white text-[13px] text-[#217346]">受講者名簿</button>
  <button aria-label="新しいシート" class="ml-8 pt-[4px]"><svg width="17" height="17" viewBox="0 0 17 17" fill="none" stroke="#777"><circle cx="8.500" cy="8.500" r="7.500"/><path d="M8.500 4.500v8M4.500 8.500h8" stroke-width="1.800"/></svg></button>
  <div class="mt-[6px] mr-[22px] ml-auto flex items-center">
    <svg class="mr-[14px]" width="4" height="12"><path d="M1 0h2v2H1zM1 5h2v2H1zM1 10h2v2H1z" fill="#b0b0b0"/></svg>
    <button aria-label="左へスクロール" class="flex h-[15px] w-[15px] items-center justify-center border border-[#ababab] bg-white"><svg width="4" height="7"><path d="M4 0v7L0 3.500z" fill="#666"/></svg></button>
    <div class="w-[478px] bg-[#d9d9d9]"><div class="h-[15px] w-[435px] border border-l-0 border-[#ababab] bg-white"></div></div>
    <button aria-label="右へスクロール" class="flex h-[15px] w-[15px] items-center justify-center border border-[#ababab] bg-white"><svg width="4" height="7"><path d="M0 0v7l4-3.500z" fill="#666"/></svg></button>
  </div>
</section>

<!-- Status bar -->
<footer class="flex h-[22px] shrink-0 items-center border-t border-[#c6c6c6] bg-[#f3f2f1] pl-2">
  <span>準備完了</span>
  <button aria-label="マクロの記録" class="ml-[19px]"><svg width="15" height="14" viewBox="0 0 15 14" fill="none" stroke="#444"><path d="M13.500 5V.5H.5v12H5M.5 3.500h13M2.500 6.500h3M2.500 9.500h2"/><circle cx="10" cy="9" r="4"/><circle cx="10" cy="9" r="1.500" fill="#444"/></svg></button>
  <div class="mr-2 ml-auto flex items-center">
    <button aria-label="標準" class="flex h-[21px] w-[37px] items-center justify-center bg-[#c6c6c6]"><svg width="13" height="13" fill="none" stroke="#222"><path d="M.5.500h12v12H.5zM.5 4.500h12M.5 8.500h12M4.500.500v12M8.500.500v12"/></svg></button>
    <button aria-label="ページ レイアウト" class="flex w-[44px] justify-center"><svg width="13" height="13" fill="none" stroke="#444"><path d="M.5.500h12v12H.5zM3 2.500h7v8H3zM4.500 4.500h4M4.500 6.500h4M4.500 8.500h4"/></svg></button>
    <button aria-label="改ページ プレビュー" class="flex w-[36px] justify-center"><svg width="13" height="13" fill="none" stroke="#444"><path d="M.5.500h12v12H.5zM.5 7.500h7v-7M4.500.500v7"/></svg></button>
    <button aria-label="縮小" class="mr-[2px] ml-1 flex"><svg width="16" height="9"><path d="M4 4.500h8" stroke="#444"/></svg></button>
    <input type="range" aria-label="ズーム" min="0" max="200" value="100" class="h-3 w-[100px] appearance-none bg-transparent bg-[linear-gradient(#aaa,#aaa)] bg-[length:100%_1px] bg-center bg-no-repeat [&::-webkit-slider-thumb]:h-[11px] [&::-webkit-slider-thumb]:w-[5px] [&::-webkit-slider-thumb]:appearance-none [&::-webkit-slider-thumb]:bg-[#777]">
    <button aria-label="拡大" class="mr-[9px] flex"><svg width="16" height="9"><path d="M4 4.500h8M8 .5v8" stroke="#444"/></svg></button>
    <span class="text-[13px]">100%</span>
  </div>
</footer>

<!-- Step markers over the sheet -->
<div class="pointer-events-none absolute inset-0 z-30 font-['Noto_Sans_CJK_JP',sans-serif] text-[28px] leading-none text-[#f00] [&>div]:absolute [&>div]:flex [&>div]:size-10 [&>div]:items-center [&>div]:justify-center [&>div]:rounded-full [&>div]:bg-white [&>div]:shadow-[1px_2px_4px_#0005]">
  <span class="absolute top-[359px] left-[96px] h-[32px] w-[112px] rounded border-[7px] border-[#f00]"></span>
  <div class="top-[401px] left-[126px]"><i class="absolute inset-[3px] rounded-full border border-[#f00]"></i><b class="font-black [text-shadow:-2px_-1px_2px_#ccc]">2</b></div>
  <div class="top-[19px] left-[143px]"><i class="absolute inset-[3px] rounded-full border border-[#f00]"></i><b class="font-black [text-shadow:-2px_-1px_2px_#ccc]">3</b></div>
  <div class="top-[67px] left-[372px]"><i class="absolute inset-[3px] rounded-full border border-[#f00]"></i><b class="font-black [text-shadow:-2px_-1px_2px_#ccc]">4</b></div>
  <div class="top-[151px] left-[512px]"><i class="absolute inset-[3px] rounded-full border border-[#f00]"></i><b class="font-black [text-shadow:-2px_-1px_2px_#ccc]">5</b></div>
</div>

<script>
const people = [
  ["会員番号","氏名","フリガナ","生年月日","郵便番号","住所","番地","マンション・部屋番号","電話番号"],
  ["1001","大田原　陽子","オオタワラ　ヨウコ","1958/3/12","162-0041","東京都新宿区早稲田鶴巻町","XXXX-X","三ノ輪マンションXXX","0354XXXXXX"],
  ["1002","市原　君江","イチハラ　キミエ","1964/10/4","226-0026","神奈川県横浜市緑区長津田町","1-1-X","","045XXXXXXX"],
  ["1003","大河内　武久","オオコウチ　タケヒサ","1985/5/18","252-0222","神奈川県相模原市中央区由野台","X-X-X","コーポコスモXXX","042XXXXXXX"],
  ["1004","香川　恵美","カガワ　エミ","1973/11/18","690-0873","島根県松江市内中原町","X-XX","","0852XXXXXX"],
  ["1005","木村　由利子","キムラ　ユリコ","1964/8/5","812-0053","福岡県福岡市東区箱崎","2-1X-X","箱崎コーポXXX","092XXXXXXX"],
  ["1006","飯泉　秋義","イイズミ　アキヨシ","1980/4/26","060-0812","北海道札幌市北区北十二条西","X-X-X","北ハイムXXX","011XXXXXXX"],
  ["1007","西山　平蔵","ニシヤマ　ヘイゾウ","1969/7/19","098-6758","北海道稚内市宗谷岬","101-X","","0162XXXXXX"],
  ["1008","山本　環","ヤマモト　タマキ","1979/11/2","604-8436","京都府京都市中京区西ノ京下合町","XXXX-X","","075XXXXXXX"],
  ["1009","萩原　幸雄","ハギワラ　ユキオ","1953/2/27","940-0063","新潟県長岡市旭町","X-X-X","コーポフェニックスXXX","0258XXXXXX"],
  ["1010","都筑　京太郎","ツヅキ　キョウタロウ","1958/12/15","850-0036","長崎県長崎市五島町","X-XXXX","","0959XXXXXX"],
  ["1011","奈良沢　良太","ナラサワ　リョウタ","1977/9/10","320-0043","栃木県宇都宮市桜","1-X-20","","0286XXXXXX"],
  ["1012","高橋　裕子","タカハシ　ユウコ","1983/10/29","230-0051","神奈川県横浜市鶴見区鶴見中央","X-10-X","鶴見マンションＡ棟　XXX号","045XXXXXXX"]
];
const head = "h-[25px] border-r border-b border-r-[#bdbdbd] border-b-[#9b9b9b] p-0 text-center font-light ";
document.getElementById("cols").innerHTML =
  `<th class="${head}"><svg class="mt-1 ml-2" width="18" height="18"><path d="M17 0v17H0z" fill="#b1b1b1"/></svg></th>` +
  [..."ABCDEFGHIJK"].map(c => `<th scope="col" class="${c === "B" ? "h-[25px] border-r border-b-2 border-r-[#9b9b9b] border-b-[#217346] bg-[#d2d2d2] p-0 text-center font-light text-[#217346]" : head}">${c}</th>`).join("") +
  `<th class="h-[25px] border-b border-[#9b9b9b] p-0"></th>`;
const plain = `<td class="h-[25px] border-r border-b border-[#d4d4d4] bg-white p-0"></td>`;
const last = `<td class="h-[25px] border-b border-[#d4d4d4] bg-white p-0"></td>`;
let html = "";
for (let r = 1; r <= 18; r++) {
  html += `<tr><th scope="row" class="${r === 6 ? "h-[25px] border-r-2 border-b border-r-[#217346] border-b-[#bdbdbd] bg-[#d2d2d2] p-0 text-center font-light text-[#217346]" : "h-[25px] border-r border-b border-r-[#9b9b9b] border-b-[#bdbdbd] p-0 text-center font-light"}">${r}</th>`;
  if (r === 1) {
    html += `<td colspan="2" class="h-[25px] border-r border-b border-r-[#d4d4d4] border-b-black bg-white p-0 pl-[3px] font-bold">エクセル入門受講者一覧</td>` +
      `<td class="h-[25px] border-r border-b border-r-[#d4d4d4] border-b-black bg-white p-0"></td>`.repeat(7) + plain + plain;
  } else if (r <= 14) {
    html += people[r - 2].map((t, i) => `<td class="${r === 2 ? "h-[25px] border-r border-b border-black bg-[#f0c26f] p-0 text-center" : i === 3 ? "h-[25px] border-r border-b border-black bg-white p-0 pr-px text-right" : "h-[25px] border-r border-b border-black bg-white p-0 pl-[2px]"}">${t}</td>`).join("") + plain + plain;
  } else html += plain.repeat(11);
  html += last + "</tr>";
}
document.getElementById("rows").innerHTML = html;
</script>
</body>
</html>
